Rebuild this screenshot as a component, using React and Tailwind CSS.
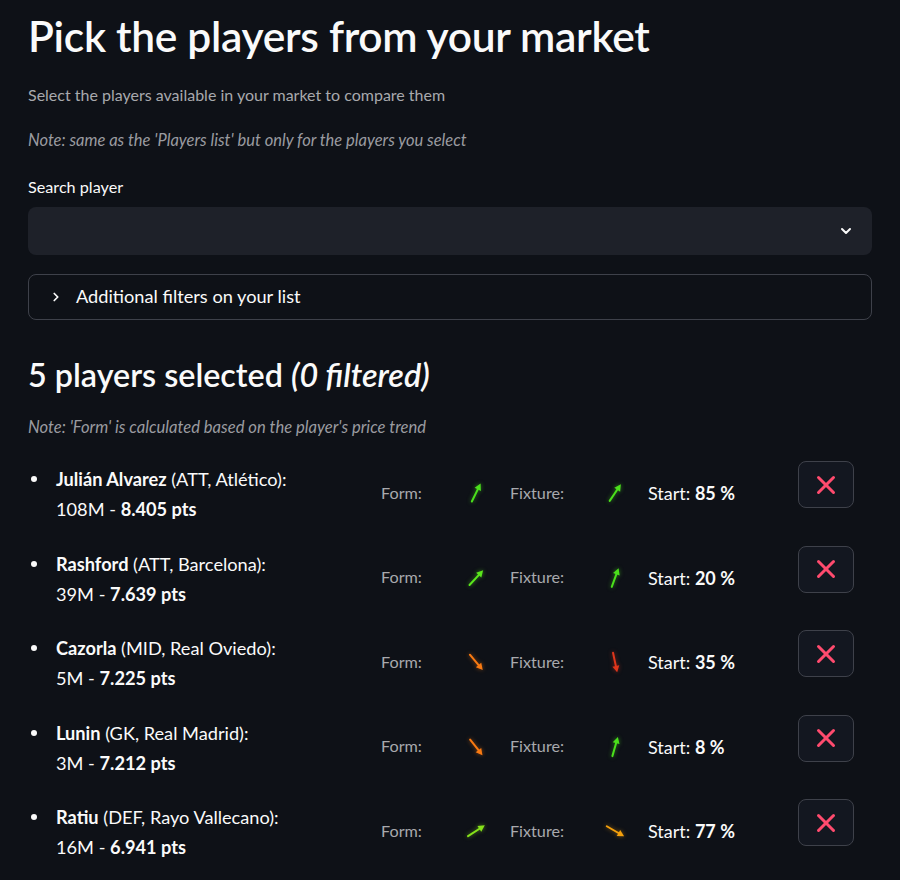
import { ChevronDown, ChevronRight, X } from "lucide-react";

const players = [
  { name: "Julián Alvarez", info: "(ATT, Atlético):", price: "108M", pts: "8.405 pts", form: { a: 64, c: "#4be01c" }, fix: { a: 56, c: "#4be01c" }, start: "85 %" },
  { name: "Rashford", info: "(ATT, Barcelona):", price: "39M", pts: "7.639 pts", form: { a: 47, c: "#5ae61c" }, fix: { a: 70, c: "#4be01c" }, start: "20 %" },
  { name: "Cazorla", info: "(MID, Real Oviedo):", price: "5M", pts: "7.225 pts", form: { a: -50, c: "#f97a12" }, fix: { a: -78, c: "#e0361c" }, start: "35 %" },
  { name: "Lunin", info: "(GK, Real Madrid):", price: "3M", pts: "7.212 pts", form: { a: -52, c: "#f97a12" }, fix: { a: 74, c: "#4be01c" }, start: "8 %" },
  { name: "Ratiu", info: "(DEF, Rayo Vallecano):", price: "16M", pts: "6.941 pts", form: { a: 33, c: "#86e21a" }, fix: { a: -30, c: "#f5a00c" }, start: "77 %" },
];

function Arrow({ a, c }) {
  return (
    <svg width="30" height="30" viewBox="-15 -15 30 30" style={{ filter: `drop-shadow(0 0 2px ${c}88)` }}>
      <g transform={`rotate(${-a})`}>
        <line x1="-9.5" y1="0" x2="6" y2="0" stroke={c} strokeWidth="2" strokeLinecap="round" />
        <polygon points="10.5,0 4,-3.5 4,3.5" fill={c} />
      </g>
    </svg>
  );
}

function PlayerRow({ p }) {
  return (
    <div className="flex items-start h-[84.5px]">
      <div className="w-[353px] flex items-start pt-[3px] text-[18.2px] leading-[30px] text-[#fafafa]">
        <div className="w-[28px] h-[30px] flex items-center">
          <div className="w-[6px] h-[6px] ml-[3px] rounded-full bg-[#fafafa]"></div>
        </div>
        <div>
          <div>
            <span className="font-bold">{p.name}</span> {p.info}
          </div>
          <div>
            {p.price} - <span className="font-bold">{p.pts}</span>
          </div>
        </div>
      </div>
      <div className="w-[129px] flex items-center pt-[17px] text-[16.2px] text-[#a8a9ad]">
        <span className="w-[80px]">Form:</span>
        <Arrow {...p.form} />
      </div>
      <div className="w-[138px] flex items-center pt-[17px] text-[16.2px] text-[#a8a9ad]">
        <span className="w-[90px]">Fixture:</span>
        <Arrow {...p.fix} />
      </div>
      <div className="w-[150px] pt-[22px] leading-[20px] text-[18px] text-[#fafafa]">
        Start: <span className="font-bold">{p.start}</span>
      </div>
      <button className="w-[56px] h-[47px] flex items-center justify-center rounded-lg border border-[#3e414a] bg-[#131720]">
        <X size={30} strokeWidth={2.4} color="#ff4b6e" />
      </button>
    </div>
  );
}

export default function App() {
  return (
    <div className="min-h-[880px] bg-[#0e1117] text-[#fafafa] font-['Lato',sans-serif] px-[28px]">
      <div className="w-[844px] flex flex-col">
        <h1 className="mt-[12px] h-[48px] leading-[48px] text-[42.5px] font-semibold tracking-[-0.3px]">
          Pick the players from your market
        </h1>
        <p className="mt-[23px] leading-[24px] text-[16px] text-[#a8a9ad]">
          Select the players available in your market to compare them
        </p>
        <p className="mt-[21px] leading-[24px] text-[16.5px] italic text-[#9a9ba0]">
          Note: same as the 'Players list' but only for the players you select
        </p>
        <label className="mt-[25px] leading-[20px] text-[16.2px] text-[#fafafa]">Search player</label>
        <div className="mt-[10px] h-[48px] rounded-lg bg-[#1e2129] flex items-center justify-end pr-[18px]">
          <ChevronDown size={16} strokeWidth={3} color="#fafafa" />
        </div>
        <div className="mt-[19px] h-[46px] rounded-lg border border-[#3e414a] flex items-center pl-[20px]">
          <ChevronRight size={14} strokeWidth={3} color="#fafafa" />
          <span className="ml-[13px] text-[18.2px]">Additional filters on your list</span>
        </div>
        <h2 className="mt-[35px] h-[40px] leading-[40px] text-[32.3px] font-semibold">
          5 players selected <span className="italic">(0 filtered)</span>
        </h2>
        <p className="mt-[20px] leading-[24px] text-[16.6px] italic text-[#9a9ba0]">
          Note: 'Form' is calculated based on the player's price trend
        </p>
        <div className="mt-[22px] flex flex-col">
          {players.map((p) => (
            <PlayerRow key={p.name} p={p} />
          ))}
        </div>
      </div>
    </div>
  );
}
